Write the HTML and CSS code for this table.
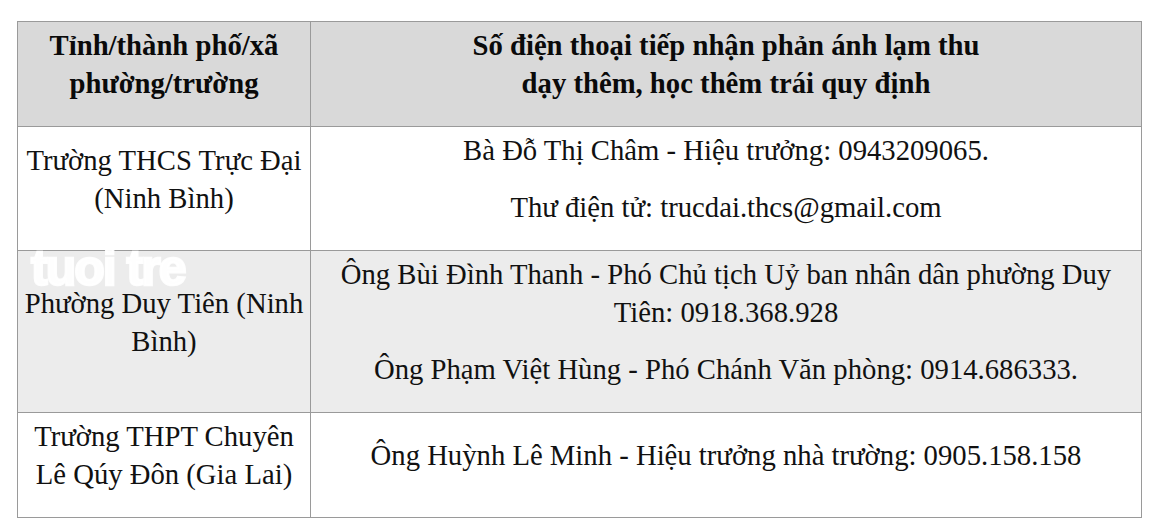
FILE: index.html
```html
<!DOCTYPE html>
<html lang="vi">
<head>
<meta charset="utf-8">
<title>Số điện thoại tiếp nhận phản ánh</title>
<link rel="stylesheet" href="styles.css">
</head>
<body>
<div class="page">
  <table class="phones">
    <colgroup>
      <col class="col-place">
      <col class="col-phone">
    </colgroup>
    <thead>
      <tr class="head">
        <th><p>Tỉnh/thành phố/xã<br>phường/trường</p></th>
        <th><p>Số điện thoại tiếp nhận phản ánh lạm thu<br>dạy thêm, học thêm trái quy định</p></th>
      </tr>
    </thead>
    <tbody>
      <tr>
        <td><p>Trường THCS Trực Đại (Ninh Bình)</p></td>
        <td>
          <p>Bà Đỗ Thị Châm - Hiệu trưởng: 0943209065.</p>
          <p>Thư điện tử: trucdai.thcs@gmail.com</p>
        </td>
      </tr>
      <tr class="shade">
        <td class="mark-cell"><span class="watermark">tuoi tre</span><p>Phường Duy Tiên (Ninh Bình)</p></td>
        <td>
          <p>Ông Bùi Đình Thanh - Phó Chủ tịch Uỷ ban nhân dân phường Duy Tiên: 0918.368.928</p>
          <p>Ông Phạm Việt Hùng - Phó Chánh Văn phòng: 0914.686333.</p>
        </td>
      </tr>
      <tr>
        <td><p>Trường THPT Chuyên Lê Qúy Đôn (Gia Lai)</p></td>
        <td><p>Ông Huỳnh Lê Minh - Hiệu trưởng nhà trường: 0905.158.158</p></td>
      </tr>
    </tbody>
  </table>
</div>
</body>
</html>
```

FILE: styles.css
```css
html, body {
  margin: 0;
  padding: 0;
  background: #ffffff;
}

.page {
  padding: 21px 14px 0 17px;
}

.phones {
  width: 1124px;
  border-collapse: collapse;
  table-layout: fixed;
  font-family: "Liberation Serif", "Times New Roman", serif;
  font-size: 28.7px;
  line-height: 38px;
  color: #111111;
}

.col-place { width: 293px; }
.col-phone { width: 831px; }

.phones th,
.phones td {
  border: 1px solid #9a9a9a;
  text-align: center;
  vertical-align: middle;
  padding: 4px 4px 5px;
}

.phones p {
  margin: 0 0 19px;
}

.head th {
  background: #d9d9d9;
  font-weight: bold;
  color: #0a0a0a;
}

.shade td {
  background: #ececec;
}

.mark-cell {
  position: relative;
}

.watermark {
  position: absolute;
  left: 13px;
  top: 1px;
  font-family: "Liberation Sans", Arial, sans-serif;
  font-weight: bold;
  font-size: 50px;
  letter-spacing: -2px;
  line-height: 32px;
  color: rgba(255, 255, 255, 0.93);
  -webkit-text-stroke: 2.5px rgba(255, 255, 255, 0.93);
}
```
